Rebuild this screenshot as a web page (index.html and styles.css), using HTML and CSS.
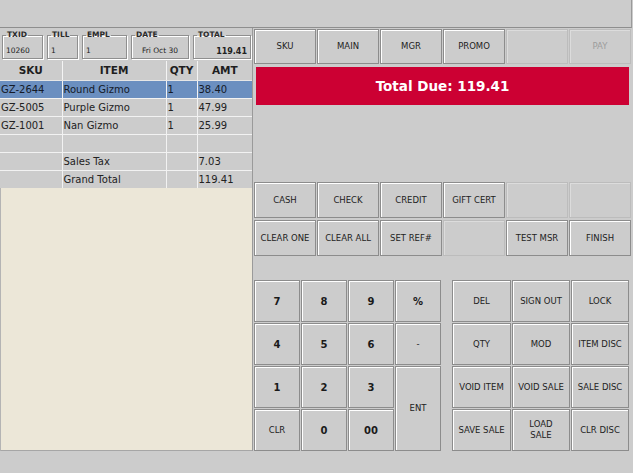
FILE: index.html
```html
<!DOCTYPE html>
<html>
<head>
<meta charset="utf-8">
<link rel="stylesheet" href="styles.css">
</head>
<body>
<div class="topbar"></div>
<div class="main">
  <section class="left">
    <div class="fields">
      <fieldset class="field f-txid"><legend>TXID</legend><div class="val">10260</div></fieldset>
      <fieldset class="field f-till"><legend>TILL</legend><div class="val">1</div></fieldset>
      <fieldset class="field f-empl"><legend>EMPL</legend><div class="val">1</div></fieldset>
      <fieldset class="field f-date"><legend>DATE</legend><div class="val center">Fri Oct 30</div></fieldset>
      <fieldset class="field f-total"><legend>TOTAL</legend><div class="val right strong">119.41</div></fieldset>
    </div>
    <table class="items">
      <colgroup><col class="c-sku"><col class="c-item"><col class="c-qty"><col class="c-amt"></colgroup>
      <thead>
        <tr><th>SKU</th><th>ITEM</th><th>QTY</th><th>AMT</th></tr>
      </thead>
      <tbody>
        <tr class="sel"><td>GZ-2644</td><td>Round Gizmo</td><td>1</td><td>38.40</td></tr>
        <tr><td>GZ-5005</td><td>Purple Gizmo</td><td>1</td><td>47.99</td></tr>
        <tr><td>GZ-1001</td><td>Nan Gizmo</td><td>1</td><td>25.99</td></tr>
        <tr><td></td><td></td><td></td><td></td></tr>
        <tr><td></td><td>Sales Tax</td><td></td><td>7.03</td></tr>
        <tr><td></td><td>Grand Total</td><td></td><td>119.41</td></tr>
      </tbody>
    </table>
    <div class="filler"></div>
  </section>
  <section class="right">
    <div class="btnrow">
      <button class="btn">SKU</button>
      <button class="btn">MAIN</button>
      <button class="btn">MGR</button>
      <button class="btn">PROMO</button>
      <button class="btn off"></button>
      <button class="btn off">PAY</button>
    </div>
    <div class="total-due">Total Due: 119.41</div>
    <div class="btnrow tender">
      <button class="btn">CASH</button>
      <button class="btn">CHECK</button>
      <button class="btn">CREDIT</button>
      <button class="btn">GIFT CERT</button>
      <button class="btn off"></button>
      <button class="btn off"></button>
      <button class="btn">CLEAR ONE</button>
      <button class="btn">CLEAR ALL</button>
      <button class="btn">SET REF#</button>
      <button class="btn off"></button>
      <button class="btn">TEST MSR</button>
      <button class="btn">FINISH</button>
    </div>
    <div class="pads">
      <div class="numpad">
        <button class="btn num">7</button>
        <button class="btn num">8</button>
        <button class="btn num">9</button>
        <button class="btn num">%</button>
        <button class="btn num">4</button>
        <button class="btn num">5</button>
        <button class="btn num">6</button>
        <button class="btn">-</button>
        <button class="btn num">1</button>
        <button class="btn num">2</button>
        <button class="btn num">3</button>
        <button class="btn ent">ENT</button>
        <button class="btn">CLR</button>
        <button class="btn num">0</button>
        <button class="btn num">00</button>
      </div>
      <div class="funcpad">
        <button class="btn">DEL</button>
        <button class="btn">SIGN OUT</button>
        <button class="btn">LOCK</button>
        <button class="btn">QTY</button>
        <button class="btn">MOD</button>
        <button class="btn">ITEM DISC</button>
        <button class="btn">VOID ITEM</button>
        <button class="btn">VOID SALE</button>
        <button class="btn">SALE DISC</button>
        <button class="btn">SAVE SALE</button>
        <button class="btn">LOAD<br>SALE</button>
        <button class="btn">CLR DISC</button>
      </div>
    </div>
  </section>
</div>
</body>
</html>
```

FILE: styles.css
```css
* { box-sizing: border-box; }
html, body { margin: 0; padding: 0; }
body {
  width: 633px;
  height: 473px;
  overflow: hidden;
  background: #cccccc;
  font-family: "DejaVu Sans", "Noto Sans", sans-serif;
  color: #222;
}

.topbar {
  height: 28px;
  width: 632px;
  border-bottom: 1px solid #8e8e8e;
  border-right: 1px solid #9a9a9a;
}

.main {
  display: flex;
  height: 423px;
}

/* ---------- left panel ---------- */
.left {
  width: 253px;
  display: flex;
  flex-direction: column;
  border-right: 1px solid #9a9a9a;
}

.fields {
  height: 33px;
  display: flex;
  gap: 4px;
  padding: 3px 0 0 2px;
}
.field {
  margin: 0;
  height: 28px;
  padding: 7px 3px 0 3px;
  border: 1px solid #8f8f8f;
  box-shadow: inset 1px 1px 0 #fff, 1px 1px 0 #fff;
  min-width: 0;
}
.field legend {
  padding: 0 1px;
  font-size: 7.5px;
  line-height: 8px;
  font-weight: bold;
  color: #2a2a2a;
}
.f-txid { width: 41px; }
.f-till { width: 31px; }
.f-empl { width: 45px; }
.f-date { width: 58px; }
.f-total { width: 58px; }
.val {
  font-size: 7.5px;
  line-height: 10px;
  white-space: nowrap;
}
.val.center { text-align: center; }
.val.right { text-align: right; }
.val.strong { font-weight: bold; font-size: 8px; }

.items {
  border-collapse: collapse;
  table-layout: fixed;
  width: 252px;
  font-size: 10px;
}
.c-sku { width: 62px; }
.c-item { width: 104px; }
.c-qty { width: 31px; }
.c-amt { width: 55px; }
.items th {
  height: 19px;
  padding: 0;
  font-size: 10.5px;
  font-weight: bold;
  color: #1e1e1e;
  text-align: center;
  border-left: 1px solid #f4f4f4;
  border-bottom: 1px solid #e6e6e6;
}
.items th:first-child { border-left: none; }
.items td {
  height: 18px;
  padding: 0 1px;
  white-space: nowrap;
  overflow: hidden;
  color: #222;
  border-left: 1px solid #f2f2f2;
  border-top: 1px solid #f2f2f2;
}
.items td:first-child { border-left: none; }
.items tr.sel td { background: #6b8fc0; color: #141a28; }

.filler {
  flex: 1;
  background: #ece7d8;
  border-left: 1px solid #b4b4b4;
  border-bottom: 1px solid #a6a6a6;
}

/* ---------- right panel ---------- */
.right {
  flex: 1;
  padding: 1px 0 0 1px;
  display: flex;
  flex-direction: column;
}

.btnrow {
  display: grid;
  grid-template-columns: repeat(6, 62px);
  grid-auto-rows: 35px;
  column-gap: 1px;
  row-gap: 2px;
}
.btnrow.tender {
  margin-top: 77px;
  grid-auto-rows: 36px;
}

.btn {
  margin: 0;
  padding: 0;
  background: #cccccc;
  border: 1px solid #8c8c8c;
  box-shadow: inset 1px 1px 0 #fff;
  font-family: inherit;
  font-size: 8.5px;
  line-height: 11px;
  color: #222;
  display: flex;
  align-items: center;
  justify-content: center;
  text-align: center;
  white-space: nowrap;
}
.btn.off {
  border-color: #bcbcbc;
  box-shadow: inset 1px 1px 0 #dcdcdc;
  color: #9c9c9c;
}
.btn.num {
  font-size: 10px;
  font-weight: bold;
  color: #1a1a1a;
}

.total-due {
  margin: 3px 4px 0 2px;
  height: 38px;
  background: #cc0033;
  color: #fff;
  font-weight: bold;
  font-size: 13.5px;
  display: flex;
  align-items: center;
  justify-content: center;
}

.pads {
  margin-top: 24px;
  display: flex;
  gap: 11px;
}
.numpad {
  display: grid;
  grid-template-columns: repeat(4, 46px);
  grid-template-rows: repeat(4, 42px);
  gap: 1px;
}
.numpad .ent {
  grid-column: 4;
  grid-row: 3 / span 2;
}
.funcpad {
  display: grid;
  grid-template-columns: 59px 58px 58px;
  grid-template-rows: repeat(4, 42px);
  gap: 1px;
}
```
